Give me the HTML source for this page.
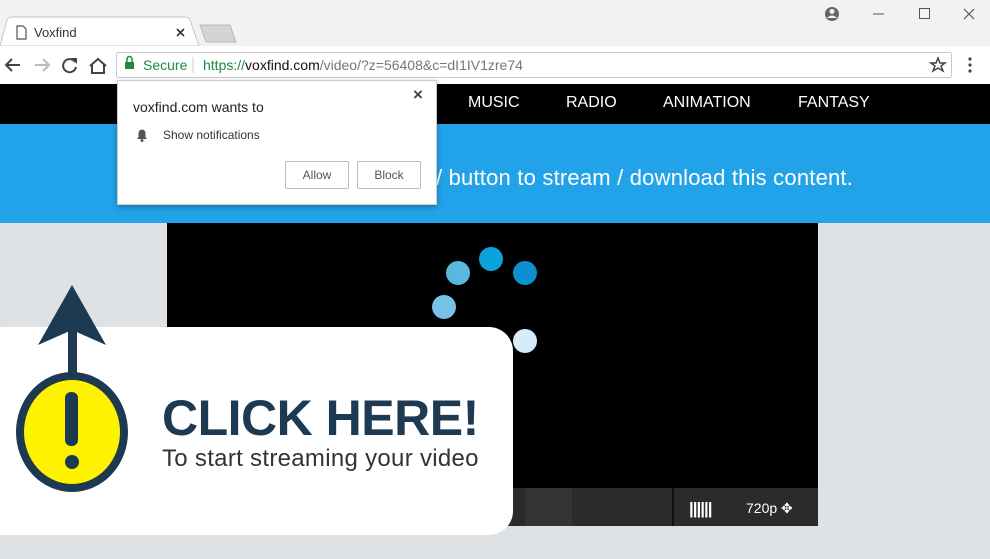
<!DOCTYPE html>
<html><head><meta charset="utf-8"><style>
*{margin:0;padding:0;box-sizing:border-box}
body{width:990px;height:559px;overflow:hidden;background:#dfe2e4;font-family:"Liberation Sans",sans-serif;position:relative}
.abs{position:absolute}
</style></head><body>
<div class="abs" style="left:0;top:0;width:990px;height:46px;background:#f2f2f2"></div>
<svg class="abs" style="left:0;top:0" width="990" height="84">
<path d="M0 46 L7 20 Q8 17 12 17 L185 17 Q189 17 190 20 L199 46 Z" fill="#fff" stroke="#c6c6c6"/>
<path d="M200 25 L230 25 L236 42 L206 42 Z" fill="#d4d4d4" stroke="#b8b8b8"/>
<path d="M17 26h6l3 3v10h-9z" fill="none" stroke="#555" stroke-width="1.2"/>
<path d="M177 29l7 7M184 29l-7 7" stroke="#333" stroke-width="1.6"/>
<circle cx="832" cy="14" r="7" fill="#666"/><circle cx="832" cy="11.5" r="2.5" fill="#f2f2f2"/><path d="M827 18q5-5 10 0" fill="#f2f2f2"/>
<path d="M873 14h11" stroke="#555"/><rect x="919.5" y="8.5" width="10" height="10" fill="none" stroke="#555"/>
<path d="M964 9l10 10M974 9l-10 10" stroke="#555" stroke-width="1.2"/>
<rect x="0" y="46" width="990" height="38" fill="#fff"/>
<path d="M20 65h-13M12 59l-6 6 6 6" fill="none" stroke="#444" stroke-width="2"/>
<path d="M48 65h-13M43 59l6 6-6 6" fill="none" stroke="#bbb" stroke-width="2"/>
<path d="M75 62a6.5 6.5 0 1 0 1 5" fill="none" stroke="#444" stroke-width="2"/><path d="M71 58l6 0 0 6z" fill="#444"/>
<path d="M90 66l8-7 8 7M92 64v9h12v-9" fill="none" stroke="#444" stroke-width="2"/>
<rect x="116.5" y="52.5" width="835" height="25" rx="2" fill="#fff" stroke="#c8c8c8"/>
<rect x="125" y="62" width="9" height="7" fill="#1e8a3b"/><path d="M127 62v-3a2.5 2.5 0 0 1 5 0v3" fill="none" stroke="#1e8a3b" stroke-width="1.5"/>
<path d="M193 57v16" stroke="#ccc"/>
<path d="M938 58l2 5h5l-4 3 2 5-5-3-5 3 2-5-4-3h5z" fill="none" stroke="#444" stroke-width="1.5"/>
<circle cx="970" cy="59" r="1.6" fill="#444"/><circle cx="970" cy="65" r="1.6" fill="#444"/><circle cx="970" cy="71" r="1.6" fill="#444"/>
</svg>
<div class="abs" style="left:34px;top:25px;font-size:13px;color:#333">Voxfind</div>
<div class="abs" style="left:143px;top:57px;font-size:14px;color:#1e8a3b">Secure</div>
<div class="abs" style="left:203px;top:57px;font-size:14px;color:#1e8a3b">https://<span style="color:#111">voxfind.com</span><span style="color:#777">/video/?z=56408&amp;c=dI1IV1zre74</span></div>
<div class="abs" style="left:0;top:84px;width:990px;height:40px;background:#000"></div>
<div class="abs" style="left:468px;top:94px;font-size:16px;color:#fff">MUSIC</div>
<div class="abs" style="left:566px;top:94px;font-size:16px;color:#fff">RADIO</div>
<div class="abs" style="left:663px;top:94px;font-size:16px;color:#fff">ANIMATION</div>
<div class="abs" style="left:798px;top:94px;font-size:16px;color:#fff">FANTASY</div>
<div class="abs" style="left:0;top:124px;width:990px;height:99px;background:#22a2e9"></div>
<div class="abs" style="left:436px;top:165px;font-size:22px;color:#fff;letter-spacing:0.2px">/ button to stream / download this content.</div>
<div class="abs" style="left:167px;top:223px;width:651px;height:265px;background:#000"></div>
<div class="abs" style="left:167px;top:488px;width:651px;height:38px;background:#2b2b2b"></div>
<div class="abs" style="left:525px;top:488px;width:47px;height:38px;background:#333"></div>
<div class="abs" style="left:672px;top:488px;width:2px;height:38px;background:#111"></div>
<div class="abs" style="left:689px;top:499px;font-size:17px;color:#fff;letter-spacing:-1px;font-weight:bold">||||||</div>
<div class="abs" style="left:746px;top:500px;font-size:14px;color:#fff">720p ✥</div>
<svg class="abs" style="left:420px;top:240px" width="130" height="120">
<circle cx="71" cy="19" r="12" fill="#0aa3db"/><circle cx="105" cy="33" r="12" fill="#0d8fd1"/>
<circle cx="38" cy="33" r="12" fill="#5ab8e0"/><circle cx="24" cy="67" r="12" fill="#78c2e8"/>
<circle cx="105" cy="101" r="12" fill="#d6ecf8"/>
</svg>
<div class="abs" style="left:-20px;top:327px;width:533px;height:208px;background:#fff;border-radius:24px"></div>
<svg class="abs" style="left:0;top:280px" width="160" height="220">
<rect x="68" y="40" width="9" height="70" fill="#1d3a52"/>
<path d="M72 5 L106 65 L72 50 L38 65 Z" fill="#1d3a52"/>
<ellipse cx="72" cy="152" rx="52" ry="56" fill="#fff200" stroke="#1d3a52" stroke-width="8"/>
<rect x="65" y="112" width="13" height="54" rx="6" fill="#1d3a52"/>
<ellipse cx="72" cy="182" rx="7" ry="7" fill="#1d3a52"/>
</svg>
<div class="abs" style="left:162px;top:389px;font-size:50px;font-weight:bold;color:#1d3a52;letter-spacing:-0.5px">CLICK HERE!</div>
<div class="abs" style="left:162px;top:445px;font-size:24px;color:#333;letter-spacing:0.3px">To start streaming your video</div>
<div class="abs" style="left:117px;top:80px;width:320px;height:125px;background:#fff;border:1px solid #ccc;box-shadow:0 2px 5px rgba(0,0,0,.3)"></div>
<div class="abs" style="left:133px;top:99px;font-size:14px;color:#222">voxfind.com wants to</div>
<div class="abs" style="left:413px;top:85px;font-size:17px;color:#444;font-weight:bold">×</div>
<svg class="abs" style="left:135px;top:127px" width="14" height="16"><path d="M2 12h10l-1.5-2V6a3.5 3.5 0 0 0-7 0v4z" fill="#555"/><circle cx="7" cy="13.5" r="1.5" fill="#555"/></svg>
<div class="abs" style="left:163px;top:128px;font-size:12px;color:#333">Show notifications</div>
<div class="abs" style="left:285px;top:161px;width:64px;height:28px;border:1px solid #bbb;border-radius:2px;font-size:12px;color:#555;text-align:center;line-height:26px">Allow</div>
<div class="abs" style="left:357px;top:161px;width:64px;height:28px;border:1px solid #bbb;border-radius:2px;font-size:12px;color:#555;text-align:center;line-height:26px">Block</div>
</body></html>
